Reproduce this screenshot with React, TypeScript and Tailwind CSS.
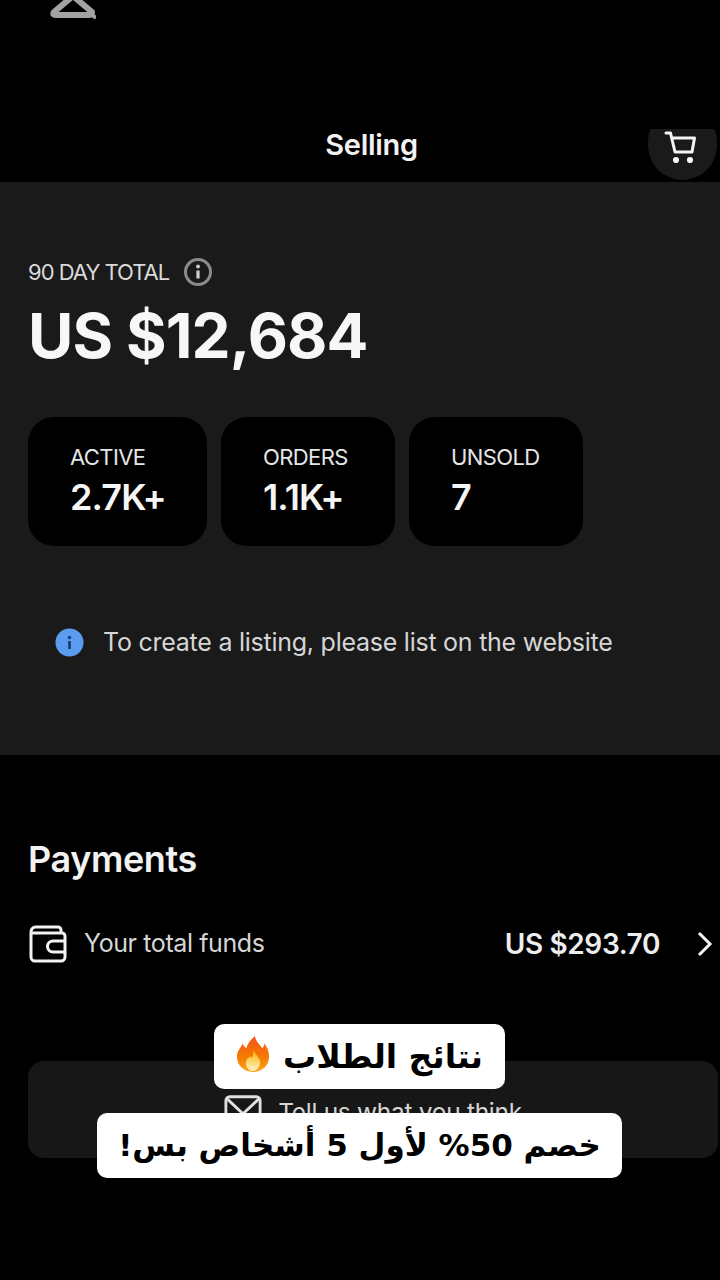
import React from "react";

const Stat = ({ label, value, w, pl }: { label: string; value: string; w: string; pl: string }) => (
  <div className={`${w} ${pl} h-[129px] rounded-[26px] bg-black pt-[26px]`}>
    <div className="text-[22px] leading-[28px] tracking-[-0.6px] text-[#e6e6e6]">{label}</div>
    <div className="mt-[6px] text-[36px] leading-[40px] font-semibold tracking-[-0.9px] text-[#f5f5f5]">{value}</div>
  </div>
);

const Flame = () => (
  <svg className="-mt-[5px]" width="34" height="38" viewBox="0 0 36 40">
    <defs>
      <linearGradient id="f1" x1="0" y1="0" x2="0" y2="1">
        <stop offset="0" stopColor="#f4511e" />
        <stop offset="0.6" stopColor="#f57c00" />
        <stop offset="1" stopColor="#f9a825" />
      </linearGradient>
      <linearGradient id="f2" x1="0" y1="0" x2="0" y2="1">
        <stop offset="0" stopColor="#ffb300" />
        <stop offset="1" stopColor="#fff3c4" />
      </linearGradient>
    </defs>
    <path d="M20 1c1 6 5 9 8 13 1-1 2-3 2-5 4 5 5 10 5 14 0 9-7 16-17 16S1 32 1 23c0-6 4-9 6-14 1 2 2 4 4 5 1-5 5-9 9-13z" fill="url(#f1)" />
    <path d="M19 16c1 4 4 6 6 10 2 5-2 12-7 12s-9-5-7-11c1-3 3-3 4-5 1 1 1 2 2 2 1-2 1-5 2-8z" fill="url(#f2)" />
  </svg>
);

export default function App() {
  return (
    <div className="relative h-[1280px] w-[720px] overflow-hidden bg-black font-['Inter',sans-serif] text-white">
      <header className="relative h-[182px]">
        <svg className="absolute left-[50px] top-[-12px]" width="46" height="32" viewBox="0 0 46 32" fill="none" stroke="#a3a3a3" strokeWidth="6" strokeLinejoin="round">
          <path d="M23 8 L4 24 Q2 27 6 27 H38 Q42 27 42 24 L23 8" />
          <path d="M38 24 L46 30" strokeWidth="4" />
        </svg>
        <div className="flex h-full justify-center pt-[127px] pl-[23px]">
          <h1 className="text-[29px] leading-[36px] font-semibold tracking-[-0.3px] text-[#f2f2f2]">Selling</h1>
        </div>
        <div className="absolute right-0 top-[129px] h-[51px] w-[72px] overflow-hidden">
          <div className="absolute left-0 top-[-22px] h-[73px] w-[69px] rounded-full bg-[#1a1a1a]" />
          <svg className="absolute left-[16px] top-[2px]" width="34" height="32" viewBox="0 0 34 32" fill="none" stroke="#f5f5f5" strokeWidth="3" strokeLinecap="round" strokeLinejoin="round">
            <path d="M2 2h4.5l4.5 19h17l2.5-14H8" />
            <circle cx="12" cy="29" r="1.6" fill="#f5f5f5" />
            <circle cx="26" cy="29" r="1.6" fill="#f5f5f5" />
          </svg>
        </div>
      </header>

      <section className="h-[573px] bg-[#1a1a1a] pl-[28px] pt-[74px]">
        <div className="flex h-[32px] items-center gap-[14px]">
          <span className="text-[22px] tracking-[-1px] text-[#d9d9d9]">90 DAY TOTAL</span>
          <svg width="30" height="30" viewBox="0 0 30 30" fill="none">
            <circle cx="15" cy="15" r="12.5" stroke="#8c8c8c" strokeWidth="3" />
            <circle cx="15" cy="9.5" r="1.9" fill="#d0d0d0" />
            <path d="M15 13.5v8" stroke="#d0d0d0" strokeWidth="3.2" />
          </svg>
        </div>
        <div className="mt-[11px] text-[62px] leading-[74px] font-bold tracking-[-0.9px] text-[#f7f7f7]">US $12,684</div>
        <div className="mt-[44px] flex gap-[14px]">
          <Stat label="ACTIVE" value="2.7K+" w="w-[179px]" pl="pl-[42px]" />
          <Stat label="ORDERS" value="1.1K+" w="w-[174px]" pl="pl-[42px]" />
          <Stat label="UNSOLD" value="7" w="w-[174px]" pl="pl-[42px]" />
        </div>
        <div className="mt-[80px] flex items-center gap-[19px] pl-[27px]">
          <svg width="29" height="29" viewBox="0 0 29 29">
            <circle cx="14.5" cy="14.5" r="14" fill="#5b9bf0" />
            <circle cx="14.5" cy="9.5" r="1.7" fill="#123a70" />
            <rect x="13.2" y="13" width="2.6" height="8" fill="#123a70" />
          </svg>
          <span className="text-[25px] leading-[32px] tracking-[-0.25px] text-[#d6d6d6]">To create a listing, please list on the website</span>
        </div>
      </section>

      <section className="pl-[28px] pt-[84px]">
        <h2 className="text-[36px] leading-[40px] font-semibold tracking-[-0.4px] text-[#f2f2f2]">Payments</h2>
        <div className="mt-[45px] flex h-[40px] items-center">
          <svg width="41" height="38" viewBox="2 0 41 38" fill="none" stroke="#f2f2f2" strokeWidth="3" strokeLinejoin="round">
            <path d="M5 8V32a4 4 0 0 0 4 4H35a4 4 0 0 0 4-4V11a3 3 0 0 0-3-3H5zM5 8a5 5 0 0 1 5-6H32a3 3 0 0 1 3 3v3" />
            <path d="M39 16H27a5 5 0 0 0 0 11H39" />
          </svg>
          <span className="ml-[15px] text-[25px] tracking-[-0.4px] text-[#d6d6d6]">Your total funds</span>
          <span className="ml-auto text-[28px] font-semibold tracking-[-0.4px] text-[#ededed]">US $293.70</span>
          <svg className="ml-[36px] mr-[7px]" width="17" height="26" viewBox="0 0 17 26" fill="none" stroke="#f2f2f2" strokeWidth="3">
            <path d="M3 2l11 11L3 24" />
          </svg>
        </div>
      </section>

      <div className="ml-[28px] mr-[2px] mt-[97px] flex h-[97px] justify-center gap-[16px] rounded-[16px] bg-[#171717] pt-[33px]">
        <svg width="38" height="32" viewBox="0 0 40 32" fill="none" stroke="#e0e0e0" strokeWidth="3">
          <rect x="2" y="2" width="36" height="28" rx="4" />
          <path d="M3 4l17 16L37 4" />
        </svg>
        <span className="text-[24.5px] leading-[36px] tracking-[-0.3px] text-[#d6d6d6]">Tell us what you think</span>
      </div>

      <div dir="rtl" className="absolute left-[214px] top-[1024px] flex h-[65px] w-[291px] items-center justify-center gap-[13px] rounded-[10px] bg-white font-['DejaVu_Sans',sans-serif] text-[33px] font-bold text-black">
        <span>نتائج الطلاب</span>
        <Flame />
      </div>
      <div dir="rtl" className="absolute left-[97px] top-[1113px] flex h-[65px] w-[525px] items-center justify-center rounded-[10px] bg-white font-['DejaVu_Sans',sans-serif] text-[31px] font-bold whitespace-nowrap text-black">
        خصم 50% لأول 5 أشخاص بس!
      </div>
    </div>
  );
}
